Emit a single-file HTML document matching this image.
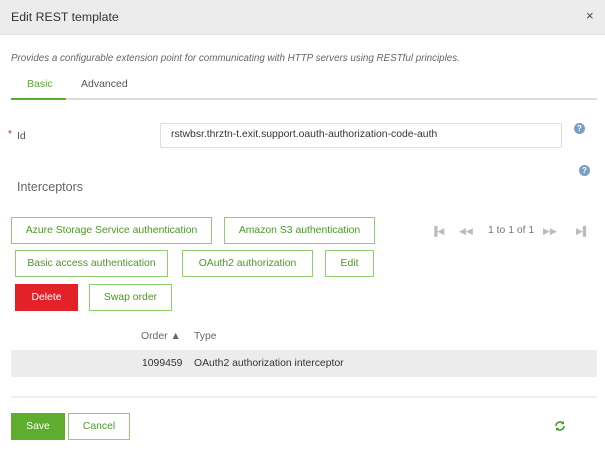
<!DOCTYPE html>
<html><head><style>
*{margin:0;padding:0;box-sizing:border-box}
body{width:605px;height:453px;background:#fff;font-family:"Liberation Sans",sans-serif;position:relative;overflow:hidden;color:#444}
.a{position:absolute;white-space:nowrap}
.btn{position:absolute;border:1px solid #8fcf6e;background:#fff;color:#4a9a22;font-size:10.4px;display:flex;align-items:center;justify-content:center}
.help{position:absolute;width:11px;height:11px;border-radius:50%;background:#7a9fc6;color:#fff;font-size:8px;font-weight:bold;text-align:center;line-height:11px}
.pg{position:absolute;color:#bbb;font-size:9px;top:226px}
</style></head><body>
<div class="a" style="left:0;top:0;width:605px;height:35px;background:#ececec;border-bottom:1px solid #e0e0e0"></div>
<div class="a" style="left:11px;top:10px;font-size:12.3px;color:#333">Edit REST template</div>
<div class="a" style="left:586px;top:8px;font-size:13px;color:#444">×</div>
<div class="a" style="left:11px;top:53px;font-size:9.8px;font-style:italic;color:#666">Provides a configurable extension point for communicating with HTTP servers using RESTful principles.</div>
<div class="a" style="left:27px;top:78px;font-size:10.5px;color:#5aaa2a">Basic</div>
<div class="a" style="left:81px;top:78px;font-size:10.5px;color:#555">Advanced</div>
<div class="a" style="left:11px;top:98px;width:586px;height:2px;background:#ddd"></div>
<div class="a" style="left:11px;top:98px;width:55px;height:2px;background:#5aaa2a"></div>
<div class="a" style="left:8px;top:129px;font-size:10px;color:#d22">*</div>
<div class="a" style="left:17px;top:130px;font-size:10.5px;color:#555">Id</div>
<div class="a" style="left:160px;top:123px;width:402px;height:25px;border:1px solid #ddd;border-radius:2px"></div>
<div class="a" style="left:171px;top:129px;font-size:10.4px;color:#333">rstwbsr.thrztn-t.exit.support.oauth-authorization-code-auth</div>
<div class="help" style="left:574px;top:123px">?</div>
<div class="help" style="left:579px;top:165px">?</div>
<div class="a" style="left:17px;top:180px;font-size:12.5px;color:#666">Interceptors</div>
<div class="btn" style="left:11px;top:217px;width:201px;height:27px">Azure Storage Service authentication</div>
<div class="btn" style="left:224px;top:217px;width:151px;height:27px">Amazon S3 authentication</div>
<div class="btn" style="left:15px;top:250px;width:153px;height:27px">Basic access authentication</div>
<div class="btn" style="left:182px;top:250px;width:131px;height:27px">OAuth2 authorization</div>
<div class="btn" style="left:325px;top:250px;width:49px;height:27px">Edit</div>
<div class="btn" style="left:15px;top:284px;width:63px;height:27px;background:#e22128;border-color:#e22128;color:#fff">Delete</div>
<div class="btn" style="left:89px;top:284px;width:83px;height:27px">Swap order</div>
<div class="pg" style="left:431px">▐◀</div>
<div class="pg" style="left:459px">◀◀</div>
<div class="a" style="left:488px;top:225px;font-size:10.4px;color:#777">1 to 1 of 1</div>
<div class="pg" style="left:543px">▶▶</div>
<div class="pg" style="left:576px">▶▌</div>
<div class="a" style="left:141px;top:331px;font-size:10.4px;color:#666">Order ▲</div>
<div class="a" style="left:194px;top:331px;font-size:10.4px;color:#666">Type</div>
<div class="a" style="left:11px;top:350px;width:586px;height:27px;background:#ececec"></div>
<div class="a" style="left:142px;top:358px;font-size:10.4px;color:#333">1099459</div>
<div class="a" style="left:194px;top:358px;font-size:10.4px;color:#333">OAuth2 authorization interceptor</div>
<div class="a" style="left:11px;top:396px;width:586px;height:2px;background:#eee"></div>
<div class="btn" style="left:11px;top:413px;width:54px;height:27px;background:#5fad2e;border-color:#5fad2e;color:#fff">Save</div>
<div class="btn" style="left:68px;top:413px;width:62px;height:27px">Cancel</div>
<svg class="a" style="left:554px;top:420px" width="12" height="12" viewBox="0 0 12 12"><path d="M2 6a4 4 0 0 1 7-2.6M10 6a4 4 0 0 1-7 2.6" fill="none" stroke="#4a9a22" stroke-width="1.6"/><path d="M10 1v3.2H6.8zM2 11V7.8h3.2z" fill="#4a9a22"/></svg>
</body></html>
